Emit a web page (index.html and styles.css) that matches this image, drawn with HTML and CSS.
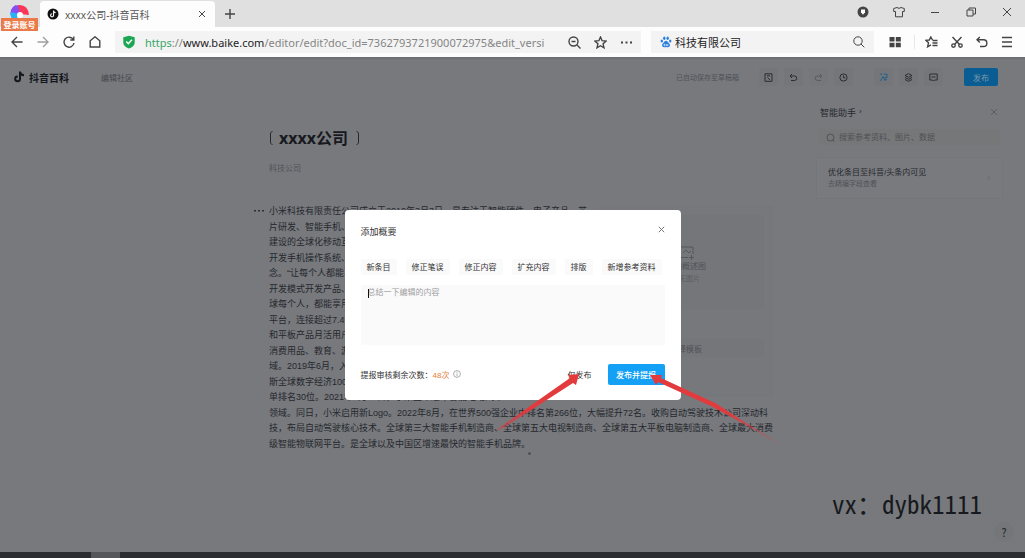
FILE: index.html
```html
<!DOCTYPE html>
<html lang="zh-CN">
<head>
<meta charset="utf-8">
<title>xxxx公司-抖音百科</title>
<link rel="stylesheet" href="styles.css">
</head>
<body>
<header class="browser">
  <div class="tabstrip">
    <button class="account" aria-label="登录账号">
      <svg width="22" height="22" viewBox="0 0 22 22"><path d="M2 16A9 9 0 0 1 7 5l4 9z" fill="#4b55f2"/><path d="M1.500 14Q2 5 11 5v9z" fill="#8a4df0"/><path d="M9 5q10-1 11 10l-9-1z" fill="#fb3656"/><path d="M2 12q-2 7 5 8l3-6z" fill="#28b3f3"/><circle cx="11" cy="15" r="3" fill="#fff"/></svg>
      <span class="account-label">登录账号</span>
    </button>
    <div class="tab">
      <svg width="12" height="12" viewBox="0 0 12 12"><circle cx="6" cy="6" r="5.5" fill="#111"/><path d="M6.600 2.500v4.800a1.500 1.500 0 1 1-1.400-1.500M6.600 2.800q.3 1.600 2 1.800" fill="none" stroke="#fff" stroke-width="1.1"/></svg>
      <span class="tab-title">xxxx公司-抖音百科</span>
      <button class="icon-btn" aria-label="关闭标签页"><svg width="8" height="8" viewBox="0 0 8 8"><path d="M1 1l6 6M7 1L1 7" class="ln"/></svg></button>
    </div>
    <button class="icon-btn new-tab" aria-label="新标签页"><svg width="12" height="12" viewBox="0 0 12 12"><path d="M6 1v10M1 6h10" class="ln bold"/></svg></button>
    <div class="window-tools">
      <button class="icon-btn" aria-label="下载"><svg width="12" height="12" viewBox="0 0 12 12"><circle cx="6" cy="6" r="5.5" fill="#444"/><path d="M4 3.600h4v2.600L6 8.800 4 6.200z" fill="#fff"/></svg></button>
      <button class="icon-btn" aria-label="皮肤"><svg width="12" height="12" viewBox="0 0 12 12"><path d="M4 1.500q2 1.800 4 0l3.300 1v3H9.500v5.300h-7V5.500H.7v-3z" class="ln"/></svg></button>
      <button class="icon-btn" aria-label="最小化"><svg width="12" height="12" viewBox="0 0 12 12"><path d="M2 6.500h8" class="ln"/></svg></button>
      <button class="icon-btn" aria-label="还原"><svg width="12" height="12" viewBox="0 0 12 12"><path d="M2 4h6v6H2zM4 4V2h6.500v6H8" class="ln"/></svg></button>
      <button class="icon-btn" aria-label="关闭"><svg width="12" height="12" viewBox="0 0 12 12"><path d="M2 2l8 8M10 2l-8 8" class="ln"/></svg></button>
    </div>
  </div>
  <div class="toolbar">
    <nav class="nav-buttons">
      <button class="icon-btn" aria-label="后退"><svg width="12" height="12" viewBox="0 0 12 12"><path d="M11.500 6H1M6 1L1 6l5 5" class="ln bold"/></svg></button>
      <button class="icon-btn faded" aria-label="前进"><svg width="12" height="12" viewBox="0 0 12 12"><path d="M.5 6H11M6 1l5 5-5 5" class="ln bold"/></svg></button>
      <button class="icon-btn" aria-label="刷新"><svg width="12" height="12" viewBox="0 0 12 12"><path d="M10.300 3.500A5 5 0 1 0 11 7M10.800.5v3.500H7.300" class="ln bold"/></svg></button>
      <button class="icon-btn" aria-label="主页"><svg width="12" height="12" viewBox="0 0 12 12"><path d="M1.200 11V4.800L6 .8l4.800 4V11z" class="ln bold"/></svg></button>
    </nav>
    <div class="address">
      <svg width="12" height="14" viewBox="0 0 12 14"><path d="M6 .8l5.700 1.400V8q-.5 3.500-5.700 5.500Q.8 11.500.3 8V2.200z" fill="#1aa653"/><path d="M3.300 6.500l2 2.200 3.600-4" fill="none" stroke="#fff" stroke-width="1.500"/></svg>
      <span class="url"><span class="url-scheme">https</span>://<span class="url-host">www.baike.com</span>/editor/edit?doc_id=7362793721900072975&amp;edit_versi</span>
      <button class="icon-btn" aria-label="缩小"><svg width="13" height="13" viewBox="0 0 13 13"><circle cx="5.500" cy="5.500" r="4.500" class="ln bold"/><path d="M3.500 5.500h4M9 9l3.500 3.500" class="ln bold"/></svg></button>
      <button class="icon-btn" aria-label="收藏"><svg width="13" height="13" viewBox="0 0 13 13"><path d="M6.500 1l1.600 3.700 4 .4-3 2.700.9 4-3.500-2.100L3 11.800l.9-4-3-2.700 4-.4z" class="ln bold"/></svg></button>
      <button class="icon-btn" aria-label="更多"><svg width="13" height="13" viewBox="0 0 13 13"><path d="M1 5.500h2v2H1zM5.500 5.500h2v2h-2zM10 5.500h2v2h-2z" fill="#444"/></svg></button>
    </div>
    <div class="search">
      <svg width="12" height="12" viewBox="0 0 12 12"><g fill="#2b7fe0"><ellipse cx="4.300" cy="2.300" rx="1.200" ry="1.700"/><ellipse cx="7.700" cy="2.300" rx="1.200" ry="1.700"/><ellipse cx="1.800" cy="5" rx="1.200" ry="1.500"/><ellipse cx="10.200" cy="5" rx="1.200" ry="1.500"/><path d="M6 4.800q1.500 0 2.300 1.700 2.500 2 1.500 3.800-.8 1.400-3.800.8-3 .6-3.800-.8-1-1.800 1.500-3.800Q4.500 4.800 6 4.800z"/></g><path d="M4 8.300h1v1.400H4zM6.500 8v1.700h1.300V8" fill="none" stroke="#fff" stroke-width=".6"/></svg>
      <input class="search-input" type="text" value="科技有限公司" aria-label="搜索">
      <button class="icon-btn" aria-label="搜索"><svg width="12" height="12" viewBox="0 0 12 12"><circle cx="5" cy="5" r="4.200" class="ln"/><path d="M8 8l3.300 3.300" class="ln"/></svg></button>
    </div>
    <div class="extras">
      <button class="icon-btn" aria-label="应用"><svg width="12" height="12" viewBox="0 0 12 12"><path d="M.5 1h5v4.500h-5zM6.800 1h5v4.500h-5zM.5 6.800h5v4.500h-5zM6.800 6.800h5v4.500h-5z" fill="#444"/></svg></button>
      <span class="divider"></span>
      <button class="icon-btn" aria-label="收藏夹"><svg width="13" height="12" viewBox="0 0 13 12"><path d="M7.500 4L5.800 1 4.300 4 .8 4.300l2.700 2.500-.9 4L6 8.800M7.500 4.500h5M7.500 7h5M7.500 9.500h5" class="ln bold"/></svg></button>
      <button class="icon-btn" aria-label="截图"><svg width="12" height="12" viewBox="0 0 12 12"><path d="M1.500 1l7 7.500M10.500 1l-7 7.500" class="ln bold"/><circle cx="2.500" cy="9.600" r="1.700" class="ln bold"/><circle cx="9.500" cy="9.600" r="1.700" class="ln bold"/></svg></button>
      <button class="icon-btn" aria-label="恢复"><svg width="12" height="12" viewBox="0 0 12 12"><path d="M3.800 1L1 3.800l2.800 2.800M1 3.800h6.500a3.300 3.300 0 0 1 0 6.700H4" class="ln bold"/></svg></button>
      <button class="icon-btn" aria-label="菜单"><svg width="12" height="12" viewBox="0 0 12 12"><path d="M1 1.500h10M1 6h10M1 10.500h10" class="ln bold"/></svg></button>
    </div>
  </div>
</header>

<main class="page">
  <div class="site-header">
    <a class="logo" href="#"><svg width="11" height="12" viewBox="0 0 11 12"><path d="M6 .5v7.500a2.400 2.400 0 1 1-2.300-2.500M6 1q.5 3 4 3.200" fill="none" stroke="#15171c" stroke-width="2"/></svg><span>抖音百科</span></a>
    <a class="community" href="#">编辑社区</a>
    <span class="saved">已自动保存至草稿箱</span>
    <div class="edit-tools">
      <button class="icon-btn" aria-label="草稿"><svg width="9" height="9" viewBox="0 0 9 9"><path d="M1 .8h7v7.500H1zM3 2.800h3M3.500 4.500L6 7" class="dk"/></svg></button>
      <button class="icon-btn" aria-label="撤销"><svg width="9" height="9" viewBox="0 0 9 9"><path d="M3 1L1 3l2 2M1 3h4.500a2.200 2.200 0 0 1 0 4.500H2" class="dk"/></svg></button>
      <button class="icon-btn pale" aria-label="重做"><svg width="9" height="9" viewBox="0 0 9 9"><path d="M6 1l2 2-2 2M8 3H3.500a2.200 2.200 0 0 0 0 4.500H7" class="dk"/></svg></button>
      <button class="icon-btn" aria-label="历史"><svg width="9" height="9" viewBox="0 0 9 9"><circle cx="4.500" cy="4.500" r="3.600" class="dk"/><path d="M4.500 2.500v2.300H6.300" class="dk"/></svg></button>
    </div>
    <div class="edit-tools side">
      <button class="icon-btn" aria-label="智能助手"><svg width="9" height="9" viewBox="0 0 9 9"><path d="M1 1.200h2.500M5 1.200h3v3.300H5.500M1.500 8L4 3.500 6.500 8M6 6.300h2" fill="none" stroke="#23608f"/></svg></button>
      <button class="icon-btn" aria-label="模板"><svg width="9" height="9" viewBox="0 0 9 9"><path d="M4.500.7L8 2.500 4.500 4.300 1 2.500zM1 4.500l3.500 1.800L8 4.500M1 6.500l3.500 1.800L8 6.500" class="dk"/></svg></button>
      <button class="icon-btn" aria-label="评论"><svg width="9" height="9" viewBox="0 0 9 9"><path d="M.8 1h7.400v6H5.500l-1 1-1-1H.8zM2.500 4h4" class="dk"/></svg></button>
    </div>
    <button class="publish">发布</button>
  </div>

  <div class="workspace">
    <button class="icon-btn more" aria-label="段落操作"><svg width="10" height="4" viewBox="0 0 10 4"><path d="M0 1h2v1.500H0zM4 1h2v1.500H4zM8 1h2v1.500H8z" fill="#2d2f34"/></svg></button>
    <article class="article">
      <h1 class="title"><svg width="4" height="16" viewBox="0 0 4 16"><path d="M3.500 1L1.500 3v10l2 2" fill="none" stroke="#26282d"/></svg><span>xxxx公司</span><svg class="close-bracket" width="4" height="16" viewBox="0 0 4 16"><path d="M.5 1l2 2v10l-2 2" fill="none" stroke="#26282d"/></svg></h1>
      <p class="subtitle">科技公司</p>
      <div class="body">
        <aside class="infobox">
          <div class="cover">
            <svg width="15" height="15" viewBox="0 0 15 15"><path d="M9 12.500H1V2h13v7M4 8l3-3 3 3 2-2M10 12.500h5M12.500 10v5" fill="none" stroke="#55575c"/></svg>
            <span>添加概述图</span><small>暂无图片</small>
          </div>
          <button class="template">选择模板</button>
        </aside>
        <div class="lines">
          <span>小米科技有限责任公司成立于2010年3月3日，是专注于智能硬件、电子产品、芯</span>
          <span>片研发、智能手机、智能电动汽车、互联网电视及智能家居生态链</span>
          <span>建设的全球化移动互联网企业、创新型科技企业。小米公司应用互联网</span>
          <span>开发手机操作系统、“为发烧而生”是小米的产品概念</span>
          <span>念。“让每个人都能享受科技的乐趣”是小米公司的愿景</span>
          <span>开发模式开发产品、用极客精神做产品，用互联网模式</span>
          <span>球每个人，都能享用来自中国的优质科技产品。消费类物联网</span>
          <span>平台，连接超过7.4亿台智能设备，进入全球市场</span>
          <span>和平板产品月活用户达到6亿。小米系投资的公司</span>
          <span>消费用品、教育、游戏、社交网络、文化娱乐、医疗健康等领</span>
          <span>域。2019年6月，入选2019福布斯中国。小米位列福布</span>
          <span>斯全球数字经济100强榜第56位。世界500强榜</span>
          <span>单排名30位。2021年3月30日，小米宣布进军智能电动汽车</span>
          <span>领域。同日，小米启用新Logo。2022年8月，在世界500强企业中排名第266位，大幅提升72名。收购自动驾驶技术公司深动科</span>
          <span>技，布局自动驾驶核心技术。全球第三大智能手机制造商、全球第五大电视制造商、全球第五大平板电脑制造商、全球最大消费</span>
          <span>级智能物联网平台。是全球以及中国区增速最快的智能手机品牌。</span>
        </div>
        <i class="resize-dot"></i>
      </div>
    </article>
    <aside class="assistant">
      <div class="assistant-head"><h2>智能助手</h2><sup>›</sup><button class="icon-btn" aria-label="关闭助手"><svg width="8" height="8" viewBox="0 0 8 8"><path d="M1 1l6 6M7 1L1 7" fill="none" stroke="#5c5e63"/></svg></button></div>
      <label class="assistant-search"><svg width="9" height="9" viewBox="0 0 9 9"><circle cx="4.500" cy="4.500" r="3.500" fill="none" stroke="#505257"/><path d="M6.500 7l2 1.500" stroke="#505257"/></svg><input type="text" placeholder="搜索参考资料、图片、数据" aria-label="搜索参考资料、图片、数据"></label>
      <section class="tip"><div><h3>优化条目至抖音/头条内可见</h3><p>去精编字段查看</p></div><span class="chevron">›</span></section>
    </aside>
  </div>
  <button class="help" aria-label="帮助">?</button>

  <div class="overlay">
    <section class="dialog" role="dialog" aria-label="添加概要">
      <div class="dialog-head"><h2>添加概要</h2><button class="icon-btn" aria-label="关闭"><svg width="7" height="7" viewBox="0 0 7 7"><path d="M.8.8l5.400 5.400M6.200.8L.8 6.200" fill="none" stroke="#777"/></svg></button></div>
      <div class="chips"><button>新条目</button><button>修正笔误</button><button>修正内容</button><button>扩充内容</button><button>排版</button><button>新增参考资料</button></div>
      <div class="summary-wrap"><textarea class="summary" placeholder="总结一下编辑的内容" aria-label="概要"></textarea><i class="caret"></i></div>
      <div class="dialog-foot">
        <span>提报审核剩余次数：<b>48次</b></span>
        <svg width="8" height="8" viewBox="0 0 8 8"><circle cx="4" cy="4" r="3.400" fill="none" stroke="#999" stroke-width=".8"/><path d="M4 1.800v1M4 3.500v2.700" stroke="#999" stroke-width=".8"/></svg>
        <button class="only">仅发布</button><button class="primary">发布并提报</button>
      </div>
      <svg class="arrows" viewBox="0 0 300 86" width="300" height="86">
        <defs>
          <linearGradient id="fadeLeft" x1="1" y1="0" x2="0" y2="1"><stop offset=".6" stop-color="#e23a3d"/><stop offset="1" stop-color="#c8474b" stop-opacity=".5"/></linearGradient>
          <linearGradient id="fadeRight" x1="0" y1="0" x2="1" y2="1"><stop offset=".5" stop-color="#e23a3d"/><stop offset="1" stop-color="#c84a50" stop-opacity=".1"/></linearGradient>
        </defs>
        <path d="M84 5L73 6l2 3L5 58l-4 4 6-2 71-46 3 2z" fill="url(#fadeLeft)"/>
        <path d="M155 6l12 0-1 3 54 25 73 46-75-42-55-25-2 3z" fill="url(#fadeRight)"/>
      </svg>
    </section>
  </div>
  <div class="watermark">vx：dybk1111</div>
</main>
<footer class="taskbar"><span class="task"></span></footer>
</body>
</html>
```

FILE: styles.css
```css
* { box-sizing: border-box; }
body {
  margin: 0;
  min-height: 100vh;
  display: flex;
  flex-direction: column;
  background: #77797d;
  color: #26282d;
  font-family: "Liberation Sans", "Noto Sans CJK SC", sans-serif;
  font-size: 9px;
}
h1, h2, h3, p { margin: 0; font-size: inherit; font-weight: 400; }
button, input, textarea { font: inherit; color: inherit; border: 0; padding: 0; margin: 0; background: none; outline: 0; }
a { color: inherit; text-decoration: none; }
svg { display: block; flex: none; }
.icon-btn { display: inline-flex; align-items: center; justify-content: center; flex: none; }
.faded { opacity: .5; }
.ln { fill: none; stroke: #444; stroke-width: 1; }
.bold { stroke-width: 1.4; }
.dk { fill: none; stroke: #2a2c31; stroke-width: 1; }

/* Browser chrome */
.browser { background: #fdfdfd; font-family: "Noto Sans", "Noto Sans CJK SC", sans-serif; }
.tabstrip { display: flex; align-items: center; height: 27px; background: #e0e0e0; }
.account { position: relative; width: 40px; height: 27px; display: flex; justify-content: center; z-index: 1; }
.account-label {
  position: absolute; left: 1px; top: 18px; width: 37px; height: 13px;
  background: #ea7a4a; color: #fff; font-size: 8px; line-height: 13px; font-weight: 700; text-align: center;
}
.tab {
  display: flex; align-items: center; gap: 6px; width: 175px; height: 26px; margin-top: 1px; padding: 0 9px 0 7px;
  background: #fdfdfd; border-radius: 4px 4px 0 0; font-size: 10px; color: #555;
}
.tab-title { flex: 1; white-space: nowrap; }
.new-tab { margin-left: 9px; }
.window-tools { display: flex; gap: 24px; margin-left: auto; padding: 0 12px 4px 0; }
.toolbar { display: flex; align-items: center; height: 30px; }
.nav-buttons { display: flex; gap: 14px; padding: 0 14px 0 11px; }
.address { display: flex; align-items: center; flex: 1; min-width: 0; height: 22px; padding: 0 8px; background: #f3f3f3; gap: 13px; }
.url { flex: 1; min-width: 0; overflow: hidden; white-space: nowrap; font-size: 11px; color: #858585; margin-left: -3px; margin-right: -4px; }
.url-scheme { color: #37a667; }
.url-host { color: #222; }
.search { display: flex; align-items: center; gap: 3px; width: 223px; height: 22px; margin-left: 10px; padding: 0 9px; background: #f3f3f3; }
.search-input { flex: 1; min-width: 0; font-size: 11px; color: #222; }
.extras { display: flex; align-items: center; gap: 13px; padding: 0 12px 0 15px; }
.divider { width: 1px; height: 14px; margin-right: -3px; background: #e8e8e8; }

/* Editor page */
.page { position: relative; flex: 1; background: #77797d; box-shadow: inset 0 2px 1px #6d6f73; }
.site-header { display: flex; align-items: center; height: 40px; padding: 0 27px 0 14px; }
.logo { display: flex; align-items: center; gap: 4px; font-size: 10px; font-weight: 700; color: #15171c; }
.community { margin-left: 32px; font-size: 8px; color: #45474c; }
.saved { margin-left: auto; font-size: 7px; color: #505257; }
.edit-tools { display: flex; gap: 6px; margin-left: 20px; }
.edit-tools .icon-btn { width: 19px; height: 18px; background: #747679; border-radius: 2px; }
.edit-tools .pale { opacity: .4; }
.side { margin-left: 21px; }
.publish { width: 34px; height: 18px; margin-left: 21px; border-radius: 2px; background: #095d92; color: #7f97a9; font-size: 8px; }
.workspace { display: grid; grid-template-columns: 269px minmax(0, 1fr) 213px; align-items: start; }
.more { justify-self: end; margin: 112px 5px 0 0; }
.article { max-width: 504px; padding-top: 30px; }
.title { display: flex; align-items: center; gap: 6px; font-size: 16px; line-height: 22px; font-weight: 700; color: #17191e; font-family: "Open Sans", "Noto Sans CJK SC", sans-serif; }
.close-bracket { margin-left: 2px; }
.subtitle { margin-top: 14px; font-size: 8px; line-height: 12px; color: #505257; }
.body { position: relative; margin-top: 28px; }
.lines { display: grid; grid-auto-rows: 16px 15px; line-height: 16px; white-space: nowrap; color: #26282d; }
.resize-dot { display: block; width: 3px; height: 3px; margin: 1px 0 0 259px; border-radius: 2px; background: #505257; }
.infobox { position: absolute; right: 0; top: 3px; width: 174px; padding: 8px; border: 1px solid #747679; background: #76787c; }
.cover { display: flex; flex-direction: column; align-items: center; gap: 2px; height: 94px; padding-top: 30px; font-size: 8px; line-height: 10px; color: #505257; background: #747679; }
.cover small { font-size: 7px; color: #5c5e63; }
.template { width: 100%; height: 18px; margin: 30px 0; font-size: 8px; color: #505257; background: #747679; }
.assistant { padding: 8px 22px 0 4px; }
.assistant-head { display: flex; align-items: center; height: 14px; padding: 0 5px 0 4px; }
.assistant-head sup { margin-left: 3px; font-size: 8px; line-height: 8px; }
.assistant-head .icon-btn { margin-left: auto; }
.assistant-search { display: flex; align-items: center; gap: 4px; height: 16px; margin: 10px 3px 0; padding-left: 7px; background: #757779; }
.assistant-search input { flex: 1; min-width: 0; font-size: 8px; }
.assistant-search input::placeholder { color: #505257; }
.tip { display: flex; align-items: center; justify-content: space-between; height: 42px; margin-top: 12px; padding: 0 12px 0 11px; background: #787a7e; border: 1px solid #747679; }
.tip h3 { font-size: 8px; line-height: 12px; }
.tip p { font-size: 7px; line-height: 10px; color: #505257; }
.chevron { color: #66686d; }
.help { position: absolute; right: 11px; bottom: 10px; width: 20px; height: 20px; border-radius: 10px; background: #747679; font-family: "Noto Sans Mono CJK SC", "DejaVu Sans Mono", monospace; font-size: 12px; line-height: 20px; }
.watermark { position: absolute; right: 43px; bottom: 33px; font-family: "Noto Sans Mono CJK SC", "Noto Sans CJK SC", monospace; font-size: 25px; line-height: 32px; color: #17191e; }

/* Summary dialog */
.overlay { position: absolute; inset: 0; display: flex; align-items: center; justify-content: center; }
.dialog { position: relative; width: 336px; padding: 15px 16px; border-radius: 4px; background: #fff; font-size: 8px; color: #333; }
.dialog-head { display: flex; justify-content: space-between; font-size: 9px; line-height: 14px; }
.dialog-head .icon-btn { height: 10px; }
.chips { display: flex; gap: 9px; margin-top: 20px; }
.chips button { height: 16px; padding: 0 6px; background: #fafafa; border-radius: 2px; white-space: nowrap; }
.summary-wrap { position: relative; margin-top: 10px; }
.summary { display: block; width: 100%; height: 60px; padding: 1px 7px; line-height: 14px; resize: none; background: #fafafb; border-radius: 2px; }
.summary::placeholder { color: #a0a0a0; }
.caret { position: absolute; left: 7px; top: 4px; width: 1px; height: 9px; background: #111; }
.dialog-foot { display: flex; align-items: center; gap: 4px; margin-top: 19px; }
.dialog-foot b { font-weight: 400; color: #e8823a; }
.only { margin-left: auto; margin-right: 12px; }
.primary { width: 57px; height: 21px; border-radius: 2px; background: #14a0f5; color: #fff; font-weight: 500; }
.arrows { position: absolute; left: 150px; top: 159px; pointer-events: none; }

.taskbar { height: 6px; background: #2b2d31; padding-left: 91px; }
.task { display: block; width: 29px; height: 6px; background: #55575b; }
```
